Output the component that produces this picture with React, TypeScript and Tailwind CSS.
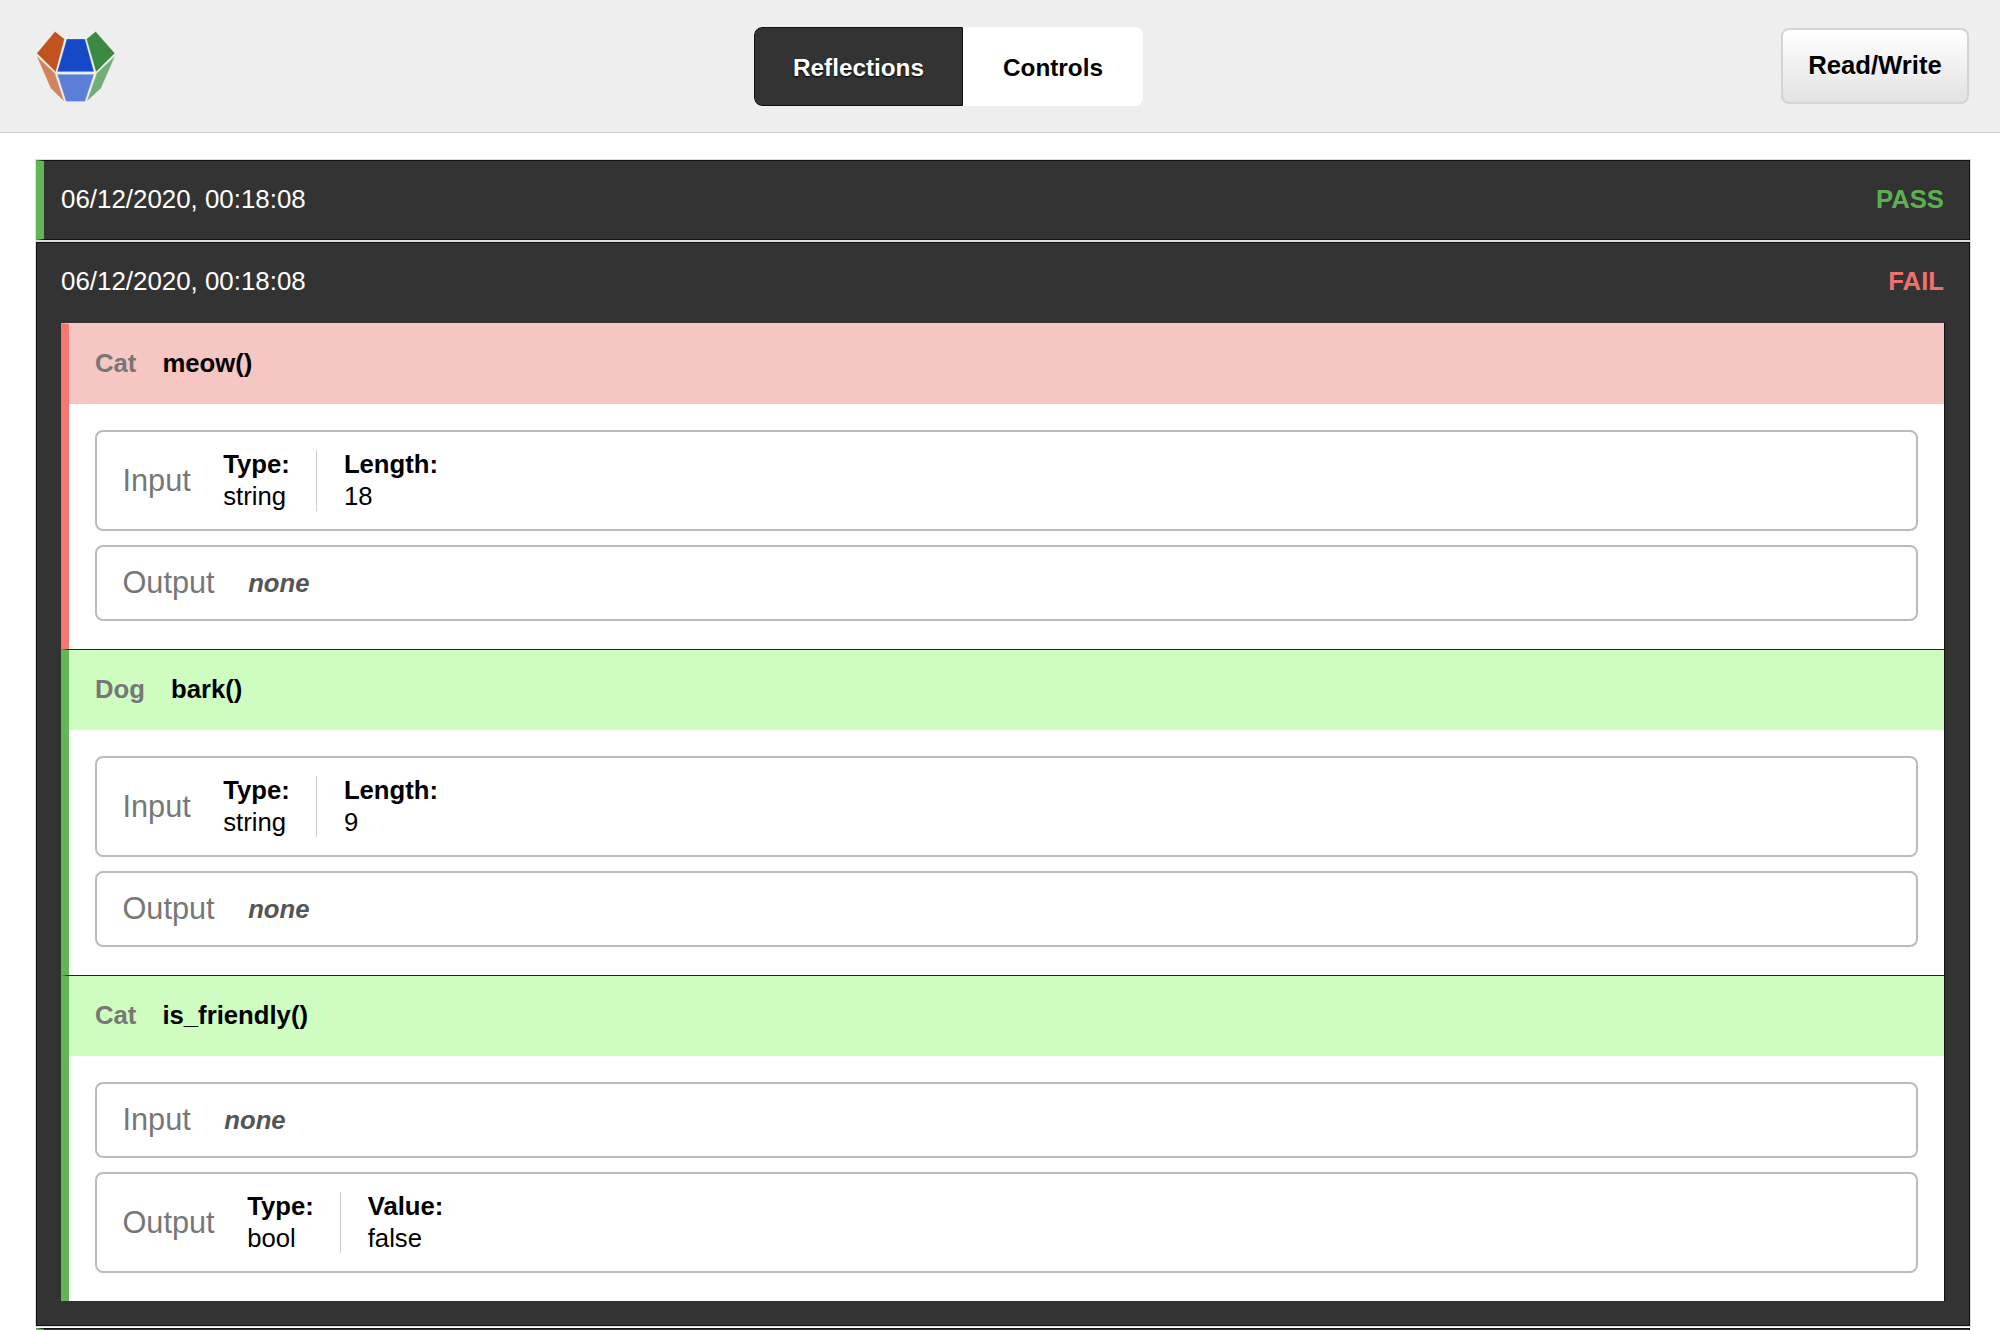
import React from "react";

type Field = { label: string; value: string };

type Call = {
  className: string;
  method: string;
  pass: boolean;
  input: Field[] | null;
  output: Field[] | null;
};

const calls: Call[] = [
  {
    className: "Cat",
    method: "meow()",
    pass: false,
    input: [
      { label: "Type:", value: "string" },
      { label: "Length:", value: "18" },
    ],
    output: null,
  },
  {
    className: "Dog",
    method: "bark()",
    pass: true,
    input: [
      { label: "Type:", value: "string" },
      { label: "Length:", value: "9" },
    ],
    output: null,
  },
  {
    className: "Cat",
    method: "is_friendly()",
    pass: true,
    input: null,
    output: [
      { label: "Type:", value: "bool" },
      { label: "Value:", value: "false" },
    ],
  },
];

function Logo() {
  return (
    <svg width="80" height="80" viewBox="0 0 80 80" className="shrink-0">
      <g stroke="#ffffff" strokeOpacity="0.5" strokeWidth="0.5">
        <polygon points="19,5.5 28.5,13 19.7,46 0.8,27.3" fill="#c1531f" />
        <polygon points="30.7,13 49,13 58,45.7 21.3,45.7" fill="#1549c8" />
        <polygon points="59.7,5.5 50.5,13 60,46 78.8,27.3" fill="#3a8a41" />
        <polygon points="21.3,48.3 58,48.3 49,75.5 30,75.5" fill="#5b7ed8" />
        <polygon points="0.5,29.7 19,47.3 28.3,75.5 14.7,62.3" fill="#d2835d" />
        <polygon points="79.2,29.7 60.7,47.3 50.7,75.5 65,62.3" fill="#73ad78" />
      </g>
    </svg>
  );
}

function Header() {
  return (
    <header className="flex h-[133px] items-center justify-between border-b border-[#ccc] bg-[#eee] pl-9 pr-[31px]">
      <Logo />
      <div className="mt-px flex h-[79px] w-[389px] overflow-hidden rounded-[8px] bg-white text-[24.3px]">
        <div className="flex w-[209px] items-center justify-center rounded-l-[8px] border border-[#111] bg-[#333] pt-[3px] font-bold text-white [text-shadow:0_1px_2px_#000]">
          Reflections
        </div>
        <div className="flex flex-1 items-center justify-center pt-[3px] font-bold text-black">
          Controls
        </div>
      </div>
      <button className="h-[76px] w-[188px] rounded-[8px] border-2 border-[#d4d4d4] bg-gradient-to-b from-white to-[#e2e2e2] pb-[2px] font-bold text-black [text-shadow:0_1px_1px_#fff]">
        Read/Write
      </button>
    </header>
  );
}

function FieldList({ fields }: { fields: Field[] }) {
  return (
    <div className="flex">
      {fields.map((field, index) => (
        <div
          key={field.label}
          className={
            index === 0
              ? "h-[61px] border-r border-[#ccc] pr-[26px]"
              : "h-[61px] pl-[27px]"
          }
        >
          <div className="font-bold leading-[29px] text-black">{field.label}</div>
          <div className="leading-[35px] text-black">{field.value}</div>
        </div>
      ))}
    </div>
  );
}

function ValueBox({ label, fields }: { label: string; fields: Field[] | null }) {
  return (
    <div
      className={`flex items-center gap-[32.5px] rounded-[8px] border-2 border-[#bbb] bg-white px-[25.5px] ${
        fields ? "h-[101px]" : "h-[76px]"
      }`}
    >
      <span className="text-[30.7px] text-[#777]">{label}</span>
      {fields ? (
        <FieldList fields={fields} />
      ) : (
        <span className="ml-px font-bold italic text-[#555]">none</span>
      )}
    </div>
  );
}

function CallRow({ call, first }: { call: Call; first: boolean }) {
  return (
    <div
      className={`border-l-8 border-t bg-white ${
        first ? "border-t-[#f6c6c2]" : "border-t-[#222]"
      } ${call.pass ? "border-l-[#62b655]" : "border-l-[#f47772]"}`}
    >
      <div
        className={`flex h-[80px] items-center gap-[26px] px-[26px] pb-px font-bold ${
          call.pass ? "bg-[#cffcc1]" : "bg-[#f6c6c2]"
        }`}
      >
        <span className="text-[#777]">{call.className}</span>
        <span className="text-black">{call.method}</span>
      </div>
      <div className="flex flex-col gap-[14px] px-[26px] pb-[27.3px] pt-[26.7px]">
        <ValueBox label="Input" fields={call.input} />
        <ValueBox label="Output" fields={call.output} />
      </div>
    </div>
  );
}

function RunHeader({ result, inset }: { result: "PASS" | "FAIL"; inset: boolean }) {
  return (
    <div
      className={`flex items-center justify-between pr-[25px] text-white ${
        inset ? "h-[79.7px] pb-[3px] pl-[24px]" : "h-[78px] pb-[2px] pl-[17px]"
      }`}
    >
      <span className="text-[25.9px]">06/12/2020, 00:18:08</span>
      <span
        className={`font-bold ${
          result === "PASS" ? "text-[#5cb14f]" : "text-[#f0706c]"
        }`}
      >
        {result}
      </span>
    </div>
  );
}

export default function App() {
  return (
    <div className="h-screen overflow-hidden bg-white font-['Liberation_Sans',Arial,sans-serif] text-[25.7px]">
      <Header />
      <main className="pl-9 pr-[30px] pt-[27px]">
        <div className="h-[80px] border border-l-8 border-[#111] border-l-[#62b655] bg-[#333] ring-1 ring-[#ddd]">
          <RunHeader result="PASS" inset={false} />
        </div>
        <div className="mt-[2px] border border-[#111] bg-[#333] pb-6 ring-1 ring-[#ddd]">
          <RunHeader result="FAIL" inset={true} />
          <div className="mx-6 border-r border-[#111]">
            {calls.map((call, index) => (
              <CallRow key={call.method} call={call} first={index === 0} />
            ))}
          </div>
        </div>
        <div className="mt-[2px] h-[80px] border border-l-8 border-[#111] border-l-[#62b655] bg-[#333]" />
      </main>
    </div>
  );
}
